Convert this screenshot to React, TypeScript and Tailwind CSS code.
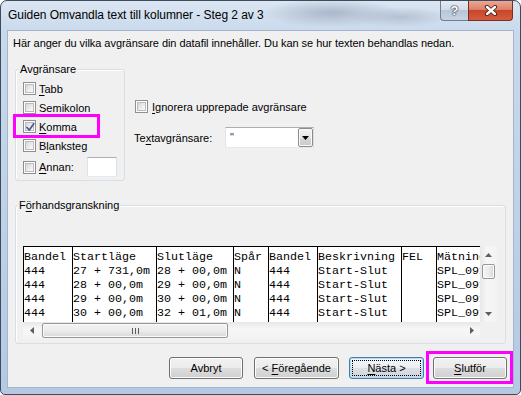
import React from "react";

const mono = "font-['Liberation_Mono','Courier_New',monospace]";

function Check({ checked }: { checked?: boolean }) {
  return (
    <span className="w-[13px] h-[13px] shrink-0 border border-[#8e8f8f] bg-white p-[1px] flex">
      <span className="flex-1 border border-[#b8bcc2] bg-[linear-gradient(135deg,#d4d6d9_0%,#eeeeef_60%,#fbfbfb_100%)] flex items-center justify-center relative">
        {checked && (
          <svg width="11" height="11" viewBox="0 0 11 11" className="absolute -left-[1px] -top-[1px]">
            <path d="M2 5.5 L4.3 8 L8.8 1.8" fill="none" stroke="#4a5d8c" strokeWidth="1.8" strokeLinecap="round" strokeLinejoin="round" />
          </svg>
        )}
      </span>
    </span>
  );
}

function Acc({ pre = "", k, post = "" }: { pre?: string; k: string; post?: string }) {
  return (
    <span className="whitespace-pre">
      {pre}
      <span className="underline underline-offset-[2px] decoration-1">{k}</span>
      {post}
    </span>
  );
}

function Btn({ w, children, isDefault }: { w: string; children: React.ReactNode; isDefault?: boolean }) {
  return (
    <div
      className={`${w} h-[22px] rounded-[3px] border flex items-center justify-center p-[2px] ${
        isDefault
          ? "border-[#3c7fb1] bg-[linear-gradient(180deg,#f3f6f9_0%,#eaeef2_50%,#dbe0e6_51%,#cfd5dc_100%)] shadow-[inset_0_0_0_1px_#b8dcf3]"
          : "border-[#707070] bg-[linear-gradient(180deg,#f2f2f2_0%,#ebebeb_50%,#dddddd_51%,#cfcfcf_100%)] shadow-[inset_0_0_0_1px_#fcfcfc]"
      }`}
    >
      <div className={`w-full h-full flex items-center justify-center ${isDefault ? "border border-dotted border-black" : ""}`}>
        {children}
      </div>
    </div>
  );
}

function Arrow({ dir }: { dir: "up" | "down" | "left" | "right" }) {
  const d = {
    up: "M0 4h7L3.5 0z",
    down: "M0 0h7L3.5 4z",
    left: "M4 0v7L0 3.5z",
    right: "M0 0v7L4 3.5z",
  }[dir];
  const vert = dir === "up" || dir === "down";
  return (
    <div className="w-[17px] h-[17px] flex items-center justify-center shrink-0">
      <svg width={vert ? 7 : 4} height={vert ? 4 : 7}>
        <path d={d} fill="#5e5e5e" />
      </svg>
    </div>
  );
}

const cols: { w: string; lines: string[] }[] = [
  { w: "w-[49px]", lines: ["Bandel", "444", "444", "444", "444"] },
  { w: "w-[84px]", lines: ["Startläge", "27 + 731,0m", "28 + 00,0m", "29 + 00,0m", "30 + 00,0m"] },
  { w: "w-[77px]", lines: ["Slutläge", "28 + 00,0m", "29 + 00,0m", "30 + 00,0m", "32 + 01,0m"] },
  { w: "w-[35px]", lines: ["Spår", "N", "N", "N", "N"] },
  { w: "w-[49px]", lines: ["Bandel", "444", "444", "444", "444"] },
  { w: "w-[84px]", lines: ["Beskrivning", "Start-Slut", "Start-Slut", "Start-Slut", "Start-Slut"] },
  { w: "w-[35px]", lines: ["FEL", "", "", "", ""] },
  { w: "w-[60px]", lines: ["Mätning", "SPL_0911", "SPL_0912", "SPL_0913", "SPL_0914"] },
];

function Preview() {
  return (
    <div className="w-[474px] h-[93px] flex flex-col">
      <div className="flex h-[76px]">
        <div className="w-[457px] h-full bg-white border-t border-black flex overflow-hidden">
          {cols.map((c, i) => (
            <div key={i} className={`${c.w} shrink-0 h-full border-l border-black pt-[3px] ${mono} text-[11.67px] leading-[14px] text-black`}>
              {c.lines.map((l, j) => (
                <div key={j} className="whitespace-pre h-[14px]">{l}</div>
              ))}
            </div>
          ))}
        </div>
        {/* vertical scrollbar */}
        <div className="w-[17px] h-full flex flex-col bg-[linear-gradient(90deg,#e8e8e8_0%,#f6f6f6_40%,#f3f3f3_100%)]">
          <Arrow dir="up" />
          <div className="flex-1 flex flex-col px-[2px]">
            <div className="h-[15px] mt-[1px] rounded-[2px] border border-[#979797] bg-[linear-gradient(90deg,#f4f4f4_0%,#ececec_50%,#d8d8d8_100%)] shadow-[inset_0_0_0_1px_#fbfbfb]" />
          </div>
          <Arrow dir="down" />
        </div>
      </div>
      <div className="flex h-[17px]">
        <div className="w-[457px] h-full flex bg-[linear-gradient(180deg,#e8e8e8_0%,#f6f6f6_40%,#f3f3f3_100%)]">
          <Arrow dir="left" />
          <div className="flex-1 flex py-[1px] pl-[2px]">
            <div className="w-[186px] h-full rounded-[2px] border border-[#979797] bg-[linear-gradient(180deg,#f4f4f4_0%,#ececec_50%,#d8d8d8_100%)] shadow-[inset_0_0_0_1px_#fbfbfb] flex items-center justify-center gap-[2px]">
              <span className="w-[1px] h-[6px] bg-[#5c5c5c]" />
              <span className="w-[1px] h-[6px] bg-[#5c5c5c]" />
              <span className="w-[1px] h-[6px] bg-[#5c5c5c]" />
            </div>
          </div>
          <Arrow dir="right" />
        </div>
        <div className="w-[17px] h-full bg-[#f0f0f0]" />
      </div>
    </div>
  );
}

function TitleBar() {
  return (
    <div className="h-[29px] shrink-0 flex items-start bg-[radial-gradient(ellipse_70px_14px_at_330px_12px,#a9b8ca_0%,rgba(169,184,202,0)_100%),radial-gradient(ellipse_50px_10px_at_400px_16px,#b3c1d2_0%,rgba(179,193,210,0)_100%)]">
      <span className="pl-[7px] pt-[6px] text-[12px] leading-[16px] tracking-[-0.05px] text-black whitespace-nowrap">
        Guiden Omvandla text till kolumner - Steg 2 av 3
      </span>
      <div className="ml-auto mr-[7px] flex">
        <div className="w-[28px] h-[20px] rounded-bl-[4px] border border-t-0 border-r-0 border-[#6f7f94] bg-[linear-gradient(180deg,#e4ebf3_0%,#d3dde9_45%,#b7c6d8_50%,#c6d3e2_100%)] flex items-center justify-center">
          <span className="text-[13px] font-bold text-white leading-none [text-shadow:0_0_1px_#2c3a4d,0_0_1px_#2c3a4d,0_0_2px_#2c3a4d]">?</span>
        </div>
        <div className="w-[45px] h-[20px] rounded-br-[4px] border border-t-0 border-[#7b2d1f] bg-[linear-gradient(180deg,#e9a897_0%,#dd8068_45%,#c8472b_50%,#d45d3c_100%)] flex items-center justify-center">
          <svg width="14" height="11" viewBox="0 0 14 11">
            <path d="M3 2 L11 9 M11 2 L3 9" stroke="#4a1d14" strokeWidth="4.2" strokeLinecap="round" />
            <path d="M3 2 L11 9 M11 2 L3 9" stroke="#ffffff" strokeWidth="2.4" strokeLinecap="round" />
          </svg>
        </div>
      </div>
    </div>
  );
}

export default function App() {
  return (
    <div className="w-[521px] h-[395px] relative overflow-hidden bg-white font-['Liberation_Sans',Arial,sans-serif] text-black">
      <div className="w-full h-full flex flex-col rounded-t-[7px] rounded-b-[5px] border border-[#3d4b5e] bg-[linear-gradient(180deg,#dbe6f2_0%,#c9d9ec_8%,#bfd2e8_50%,#b4c9e3_100%)]">
        <TitleBar />

        {/* client area */}
        <div className="mx-[6px] mb-[6px] flex-1 border border-[#a5b6cc] bg-[#f0f0f0] flex flex-col text-[11px] leading-[14px]">
          <p className="mt-[5px] ml-[5px] h-[14px] whitespace-nowrap tracking-[-0.05px]">
            Här anger du vilka avgränsare din datafil innehåller. Du kan se hur texten behandlas nedan.
          </p>

          <div className="mt-[19px] flex items-start">
            {/* Avgränsare */}
            <div className="ml-[7px] w-[110px] h-[112px] relative rounded-[3px] border border-[#d5dfe5] shadow-[inset_1px_1px_0_#ffffff] pt-[9px] pl-[7px]">
              <span className="absolute left-[3px] -top-[8px] px-[1px] bg-[#f0f0f0]">Avgränsare</span>
              <div className="h-[19px] flex items-center gap-[3px]"><Check /><Acc k="T" post="abb" /></div>
              <div className="h-[19px] flex items-center gap-[3px]"><Check /><Acc pre="S" k="e" post="mikolon" /></div>
              <div className="h-[19px] flex items-center gap-[3px]"><Check checked /><Acc k="K" post="omma" /></div>
              <div className="h-[19px] flex items-center gap-[3px]"><Check /><Acc pre="B" k="l" post="anksteg" /></div>
              <div className="mt-[2px] h-[20px] flex items-center gap-[3px]">
                <Check />
                <span className="w-[45px]"><Acc k="A" post="nnan:" /></span>
                <span className="w-[30px] h-[20px] bg-white border border-[#abadb3] border-l-[#e2e3ea] border-r-[#dbdfe6] border-b-[#e3e9ef]" />
              </div>
            </div>

            {/* right options */}
            <div className="ml-[10px] flex flex-col">
              <div className="mt-[28px] h-[19px] flex items-center gap-[4px]">
                <Check />
                <Acc k="I" post="gnorera upprepade avgränsare" />
              </div>
              <div className="mt-[11px] h-[21px] flex items-center -ml-[1px]">
                <span className="w-[91px]"><Acc pre="Te" k="x" post="tavgränsare:" /></span>
                <div className="w-[89px] h-[21px] bg-white border border-[#abadb3] border-l-[#e2e3ea] border-r-[#dbdfe6] border-b-[#e3e9ef] flex items-start">
                  <span className="pl-[4px] pt-[2px] text-[#1b2c5c]">"</span>
                  <div className="ml-auto w-[15px] h-[19px] rounded-[2px] border border-[#8c8c8c] bg-[linear-gradient(180deg,#f3f3f3_0%,#e6e6e6_50%,#d6d6d6_51%,#cbcbcb_100%)] shadow-[inset_0_0_0_1px_#fafafa] flex items-center justify-center">
                    <svg width="7" height="4"><path d="M0 0h7L3.5 4z" fill="#000" /></svg>
                  </div>
                </div>
              </div>
            </div>
          </div>

          {/* Förhandsgranskning */}
          <div className="mt-[24px] ml-[7px] w-[491px] h-[139px] relative rounded-[3px] border border-[#d5dfe5] shadow-[inset_1px_1px_0_#ffffff] pt-[40px] pl-[7px]">
            <span className="absolute left-[2px] -top-[8px] px-[1px] bg-[#f0f0f0]">
              <Acc pre="F" k="ö" post="rhandsgranskning" />
            </span>
            <Preview />
          </div>

          {/* buttons */}
          <div className="mt-[13px] mr-[6px] flex justify-end">
            <Btn w="w-[74px]">Avbryt</Btn>
            <div className="ml-[11px]"><Btn w="w-[85px]"><Acc pre="< " k="F" post="öregående" /></Btn></div>
            <div className="ml-[10px]"><Btn w="w-[75px]" isDefault><Acc k="N" post="ästa >" /></Btn></div>
            <div className="ml-[9px]"><Btn w="w-[74px]"><Acc k="S" post="lutför" /></Btn></div>
          </div>
        </div>
      </div>

      {/* highlight annotations */}
      <div className="absolute left-[13px] top-[114px] w-[87px] h-[24px] border-[3px] border-[#ff00ff]" />
      <div className="absolute left-[426px] top-[351px] w-[87px] h-[33px] border-[3px] border-[#ff00ff]" />
    </div>
  );
}
